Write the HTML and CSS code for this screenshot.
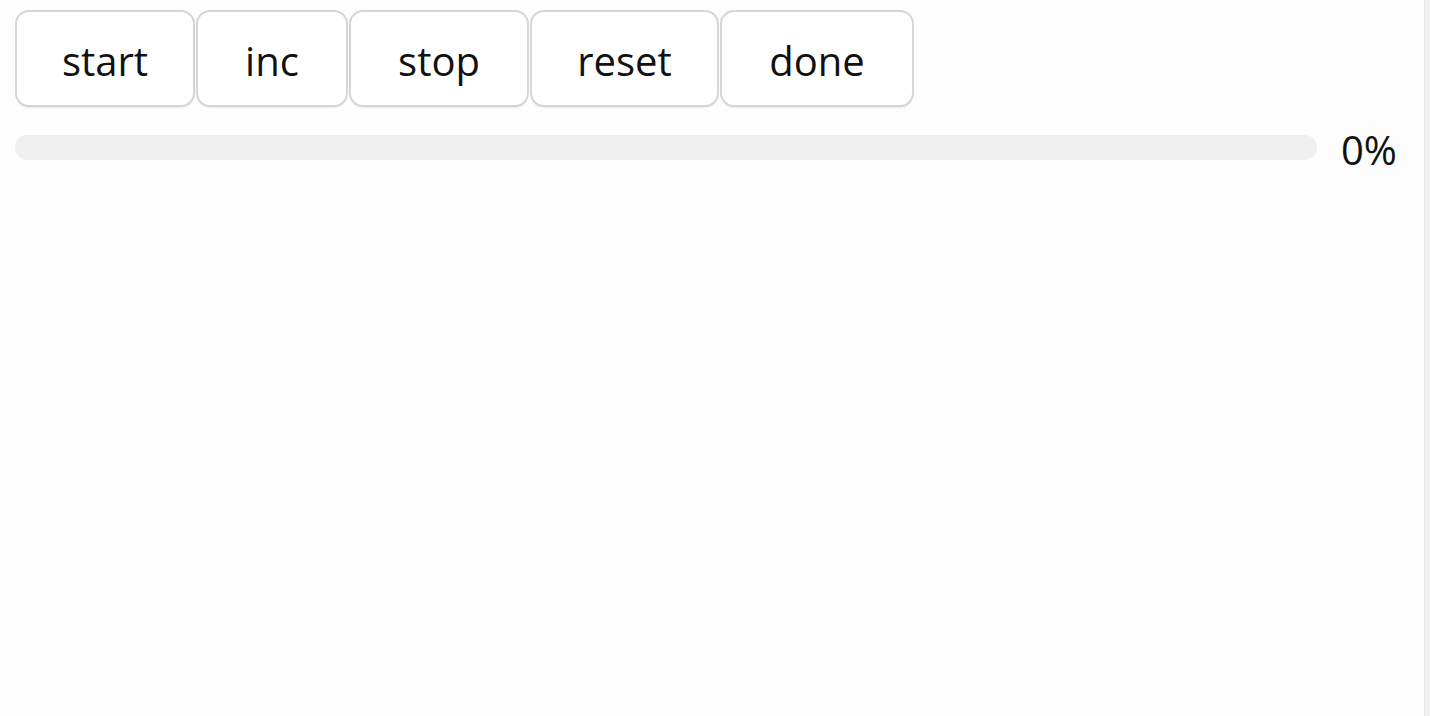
FILE: index.html
```html
<!DOCTYPE html>
<html>
<head>
<meta charset="utf-8">
<link rel="stylesheet" href="styles.css">
</head>
<body>
<div class="page">
  <div class="toolbar">
    <button class="btn btn-start">start</button>
    <button class="btn btn-inc">inc</button>
    <button class="btn btn-stop">stop</button>
    <button class="btn btn-reset">reset</button>
    <button class="btn btn-done">done</button>
  </div>
  <div class="progress-row">
    <div class="track"><div class="fill" style="width:0%"></div></div>
    <span class="pct">0%</span>
  </div>
</div>
<div class="edge"></div>
</body>
</html>
```
FILE: styles.css
```css
html, body {
  margin: 0;
  height: 100%;
  background: #fdfdfd;
}
body {
  font-family: "Open Sans", "Noto Sans", sans-serif;
  color: #111111;
  display: flex;
}
.page {
  flex: 1;
  padding: 10px 25px 0 15px;
  display: flex;
  flex-direction: column;
}
.toolbar {
  display: flex;
  gap: 1px;
}
.btn {
  font-family: inherit;
  font-size: 40px;
  color: #111111;
  background: #ffffff;
  border: 2px solid #d6d6d6;
  border-radius: 14px;
  height: 97px;
  padding: 3px 0 0;
  display: flex;
  align-items: center;
  justify-content: center;
  box-sizing: border-box;
  box-shadow: 0 2px 1px -1px #ececec;
}
.btn-start { width: 180px; }
.btn-inc { width: 152px; }
.btn-stop { width: 180px; }
.btn-reset { width: 189px; }
.btn-done { width: 194px; }
.progress-row {
  display: flex;
  align-items: center;
  gap: 24px;
  margin-top: 18px;
}
.track {
  flex: 1;
  height: 25px;
  border-radius: 13px;
  background: #efefef;
  overflow: hidden;
}
.fill {
  height: 100%;
  background: #4a90e2;
}
.pct {
  font-size: 40px;
  line-height: 1;
  margin-top: 5px;
  width: 58px;
}
.edge {
  width: 5px;
  background: #f1f1f1;
  border-left: 1px solid #e6e6e6;
}
```
